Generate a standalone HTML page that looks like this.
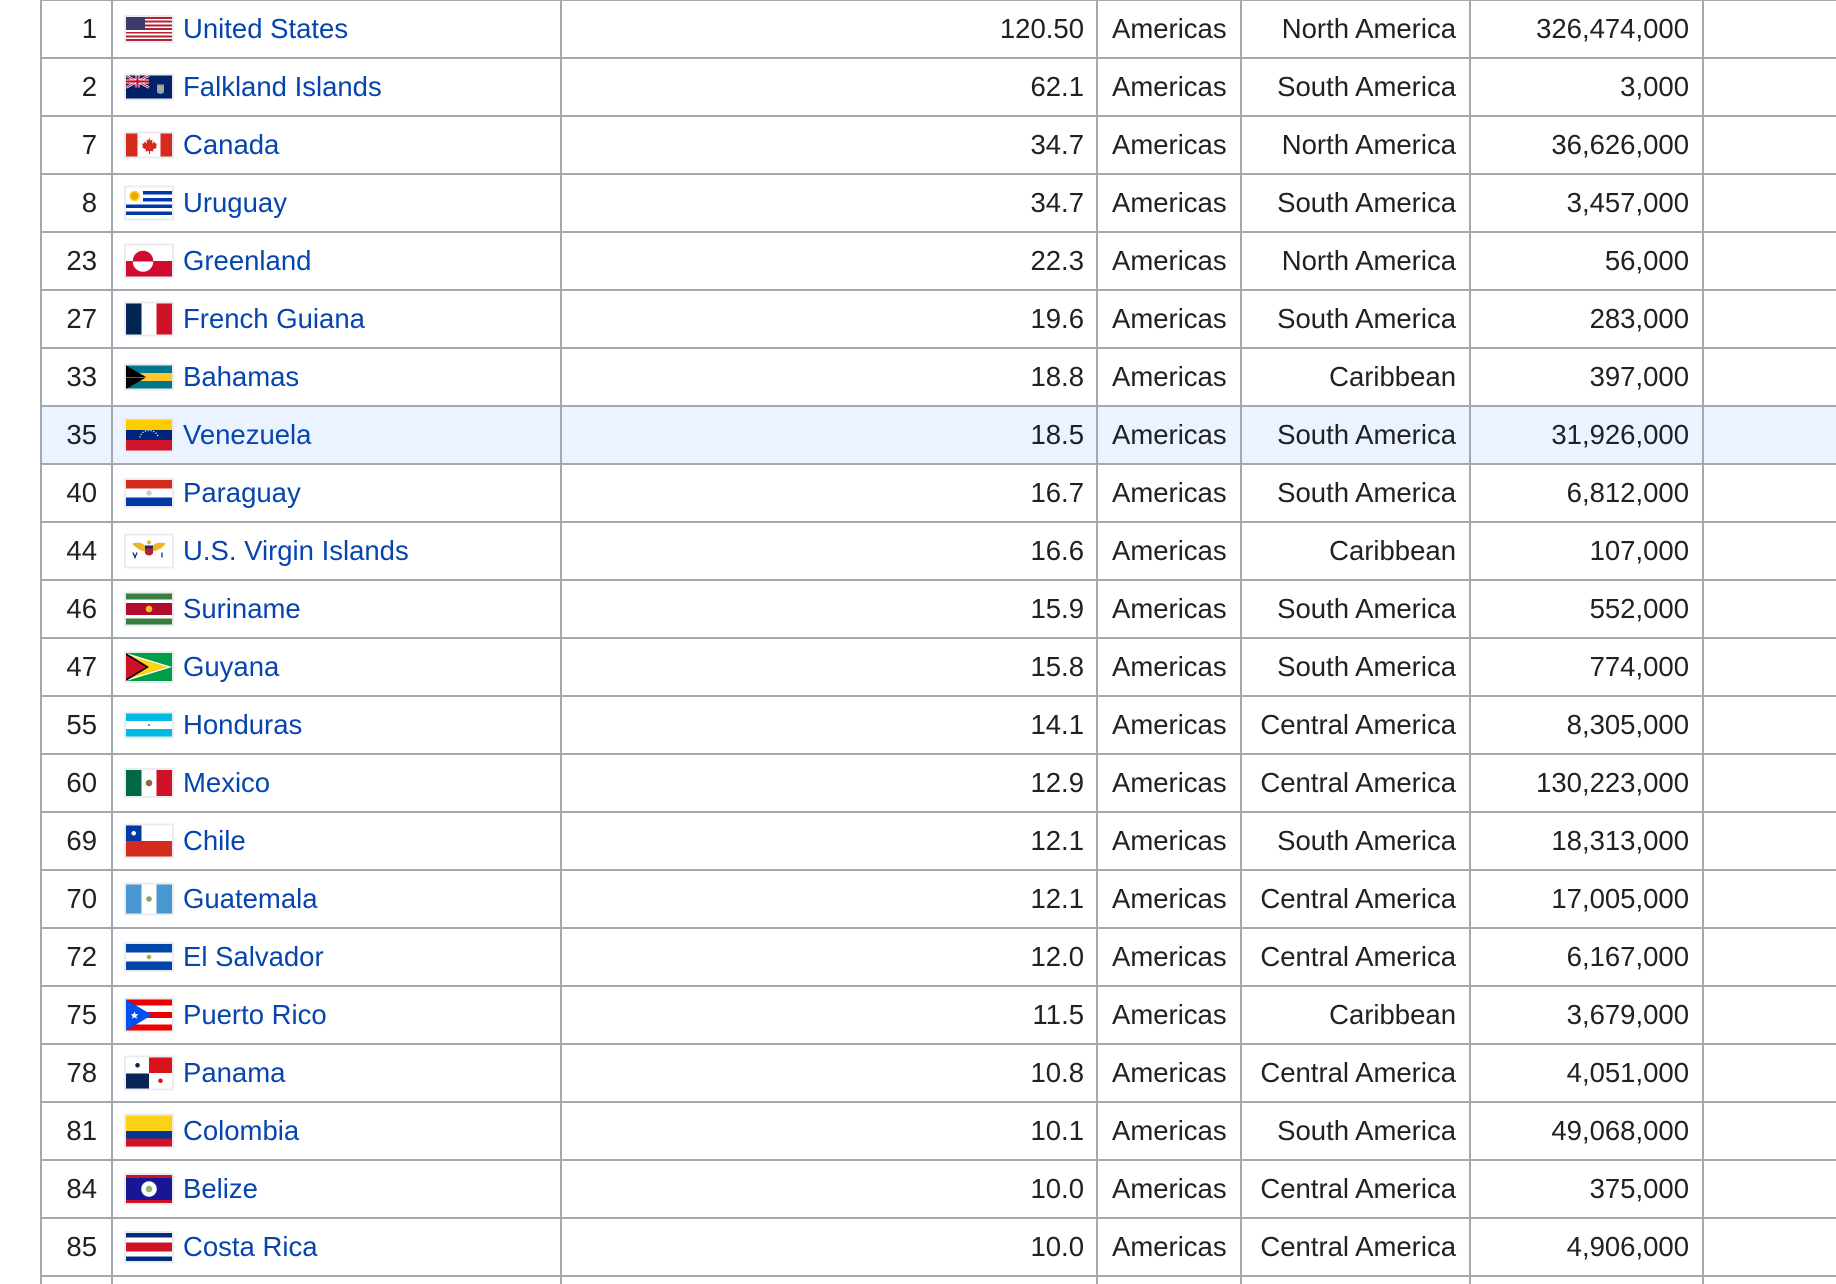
<!DOCTYPE html>
<html><head><meta charset="utf-8">
<style>
html,body{margin:0;padding:0;background:#fff;width:1836px;height:1284px;overflow:hidden;position:relative;font-family:"Liberation Sans",Arial,sans-serif;font-size:27.5px;color:#202122}
.h{position:absolute;left:40px;width:1796px;height:2px;background:#a2a9b1}
.v{position:absolute;top:0;height:1284px;width:2px;background:#a2a9b1}
.r{position:absolute;left:0;width:1836px;height:56px}
.r div{position:absolute;top:0;height:56px;line-height:56px;white-space:nowrap}
.n{right:1739px;text-align:right}
.c{left:183px;color:#0645ad}
.x{right:752px}
.a{left:1112px}
.g{right:380px}
.p{right:147px}
.f{position:absolute;left:124px;width:46px;border:2px solid #eaecf0;top:50%;transform:translateY(-50%)}
.f svg{display:block}
</style></head><body>

<div style="position:absolute;left:42px;top:407px;width:1794px;height:56px;background:#eaf3ff"></div>

<div class="v" style="left:40px"></div>
<div class="v" style="left:111px"></div>
<div class="v" style="left:560px"></div>
<div class="v" style="left:1096px"></div>
<div class="v" style="left:1240px"></div>
<div class="v" style="left:1469px"></div>
<div class="v" style="left:1702px"></div>

<div class="h" style="top:-1px"></div>
<div class="h" style="top:57px"></div>
<div class="h" style="top:115px"></div>
<div class="h" style="top:173px"></div>
<div class="h" style="top:231px"></div>
<div class="h" style="top:289px"></div>
<div class="h" style="top:347px"></div>
<div class="h" style="top:405px"></div>
<div class="h" style="top:463px"></div>
<div class="h" style="top:521px"></div>
<div class="h" style="top:579px"></div>
<div class="h" style="top:637px"></div>
<div class="h" style="top:695px"></div>
<div class="h" style="top:753px"></div>
<div class="h" style="top:811px"></div>
<div class="h" style="top:869px"></div>
<div class="h" style="top:927px"></div>
<div class="h" style="top:985px"></div>
<div class="h" style="top:1043px"></div>
<div class="h" style="top:1101px"></div>
<div class="h" style="top:1159px"></div>
<div class="h" style="top:1217px"></div>
<div class="h" style="top:1275px"></div>

<div class="r" style="top:1px"><div class="n">1</div>
<span class="f" style="height:24px;background:linear-gradient(#3c3b6e,#3c3b6e) 0 0/19px 13px no-repeat,repeating-linear-gradient(#b22234 0 1.85px,#fff 1.85px 3.7px)"></span>
<div class="c">United States</div><div class="x">120.50</div><div class="a">Americas</div><div class="g">North America</div><div class="p">326,474,000</div></div>

<div class="r" style="top:59px"><div class="n">2</div>
<span class="f" style="height:23px;background:#012169"><svg width="46" height="23"><path d="M0 0L23 12M23 0L0 12" stroke="#fff" stroke-width="2.4"/><path d="M0 0L23 12M23 0L0 12" stroke="#c8102e" stroke-width="1"/><path d="M11.5 0V12M0 6H23" stroke="#fff" stroke-width="4"/><path d="M11.5 0V12M0 6H23" stroke="#c8102e" stroke-width="2.2"/><path d="M31 9h7v8q-3.5 3-7 0z" fill="#6fa8dc"/><path d="M32 11h5v4h-5z" fill="#c9a66b"/></svg></span>
<div class="c">Falkland Islands</div><div class="x">62.1</div><div class="a">Americas</div><div class="g">South America</div><div class="p">3,000</div></div>

<div class="r" style="top:117px"><div class="n">7</div>
<span class="f" style="height:23px;background:linear-gradient(90deg,#d52b1e 0 11.5px,#fff 11.5px 34.5px,#d52b1e 34.5px)"><svg width="46" height="23"><path d="M23 4l1.5 3 2-1-0.5 4 2.5-2 0.5 2 2 0-1 3 1 1-4 2 0.5 2-3.5-0.5v3h-1v-3l-3.5 0.5 0.5-2-4-2 1-1-1-3 2 0 0.5-2 2.5 2-0.5-4 2 1z" fill="#d52b1e"/></svg></span>
<div class="c">Canada</div><div class="x">34.7</div><div class="a">Americas</div><div class="g">North America</div><div class="p">36,626,000</div></div>

<div class="r" style="top:175px"><div class="n">8</div>
<span class="f" style="height:31px;background:radial-gradient(circle at 8.5px 8.5px,#e5a50a 0 3.5px,#fcd116 3.5px 5px,#fff 5.5px) 0 0/17px 17px no-repeat,repeating-linear-gradient(#fff 0 3.44px,#0038a8 3.44px 6.89px)"></span>
<div class="c">Uruguay</div><div class="x">34.7</div><div class="a">Americas</div><div class="g">South America</div><div class="p">3,457,000</div></div>

<div class="r" style="top:233px"><div class="n">23</div>
<span class="f" style="height:31px;background:radial-gradient(circle at 17px 15.5px,#d00c33 0 10px,transparent 10.5px) 0 0/46px 15.5px no-repeat,radial-gradient(circle at 17px 0,#fff 0 10px,transparent 10.5px) 0 15.5px/46px 15.5px no-repeat,linear-gradient(#fff 50%,#d00c33 50%)"></span>
<div class="c">Greenland</div><div class="x">22.3</div><div class="a">Americas</div><div class="g">North America</div><div class="p">56,000</div></div>

<div class="r" style="top:291px"><div class="n">27</div>
<span class="f" style="height:31px;background:linear-gradient(90deg,#002654 33.3%,#fff 33.3% 66.6%,#ce1126 66.6%)"></span>
<div class="c">French Guiana</div><div class="x">19.6</div><div class="a">Americas</div><div class="g">South America</div><div class="p">283,000</div></div>

<div class="r" style="top:349px"><div class="n">33</div>
<span class="f" style="height:23px;background:linear-gradient(to top right,#000 50%,transparent 50%) 0 0/20px 11.5px no-repeat,linear-gradient(to bottom right,#000 50%,transparent 50%) 0 11.5px/20px 11.5px no-repeat,linear-gradient(#00778b 33.3%,#ffc72c 33.3% 66.6%,#00778b 66.6%)"></span>
<div class="c">Bahamas</div><div class="x">18.8</div><div class="a">Americas</div><div class="g">Caribbean</div><div class="p">397,000</div></div>

<div class="r" style="top:407px"><div class="n">35</div>
<span class="f" style="height:31px;background:linear-gradient(#ffcc00 33.3%,#00247d 33.3% 66.6%,#cf142b 66.6%)"><svg width="46" height="31"><path d="M14 18A9 7 0 0 1 32 18" fill="none" stroke="#fff" stroke-width="1.2" stroke-dasharray="1.2 1.6"/></svg></span>
<div class="c">Venezuela</div><div class="x">18.5</div><div class="a">Americas</div><div class="g">South America</div><div class="p">31,926,000</div></div>

<div class="r" style="top:465px"><div class="n">40</div>
<span class="f" style="height:26px;background:radial-gradient(circle at 23px 13px,#c8d0c8 0 2.5px,transparent 3px),linear-gradient(#d52b1e 33.3%,#fff 33.3% 66.6%,#0038a8 66.6%)"></span>
<div class="c">Paraguay</div><div class="x">16.7</div><div class="a">Americas</div><div class="g">South America</div><div class="p">6,812,000</div></div>

<div class="r" style="top:523px"><div class="n">44</div>
<span class="f" style="height:31px;background:#fff"><svg width="46" height="31"><path d="M6 8Q16 5 21 12L19 16Q12 15 6 8zM40 8Q30 5 25 12L27 16Q34 15 40 8z" fill="#e8b828"/><path d="M19 10h8v8q-4 4-8 0z" fill="#b22234"/><path d="M19 10h8v3h-8z" fill="#162e6e"/><circle cx="23" cy="7" r="2" fill="#e8b828"/><path d="M7 17l2 5 2-5M36 17v5" stroke="#162e6e" stroke-width="1.3" fill="none"/></svg></span>
<div class="c">U.S. Virgin Islands</div><div class="x">16.6</div><div class="a">Americas</div><div class="g">Caribbean</div><div class="p">107,000</div></div>

<div class="r" style="top:581px"><div class="n">46</div>
<span class="f" style="height:31px;background:radial-gradient(circle at 23px 15.5px,#ecc81d 0 3px,transparent 3.5px),linear-gradient(#377e3f 20%,#fff 20% 30%,#b40a2d 30% 70%,#fff 70% 80%,#377e3f 80%)"></span>
<div class="c">Suriname</div><div class="x">15.9</div><div class="a">Americas</div><div class="g">South America</div><div class="p">552,000</div></div>

<div class="r" style="top:639px"><div class="n">47</div>
<span class="f" style="height:28px;background:#009e49"><svg width="46" height="28"><path d="M0 0L46 14L0 28z" fill="#fff"/><path d="M0 1.5L42 14L0 26.5z" fill="#fcd116"/><path d="M0 0L23 14L0 28z" fill="#000"/><path d="M0 2L20 14L0 26z" fill="#ce1126"/></svg></span>
<div class="c">Guyana</div><div class="x">15.8</div><div class="a">Americas</div><div class="g">South America</div><div class="p">774,000</div></div>

<div class="r" style="top:697px"><div class="n">55</div>
<span class="f" style="height:23px;background:radial-gradient(circle at 23px 11.5px,#00bce4 0 1px,transparent 1.3px),linear-gradient(#00bce4 33.3%,#fff 33.3% 66.6%,#00bce4 66.6%)"></span>
<div class="c">Honduras</div><div class="x">14.1</div><div class="a">Americas</div><div class="g">Central America</div><div class="p">8,305,000</div></div>

<div class="r" style="top:755px"><div class="n">60</div>
<span class="f" style="height:26px;background:radial-gradient(circle at 23px 13px,#8c6a3c 0 3px,transparent 3.5px),linear-gradient(90deg,#006847 33.3%,#fff 33.3% 66.6%,#ce1126 66.6%)"></span>
<div class="c">Mexico</div><div class="x">12.9</div><div class="a">Americas</div><div class="g">Central America</div><div class="p">130,223,000</div></div>

<div class="r" style="top:813px"><div class="n">69</div>
<span class="f" style="height:31px;background:radial-gradient(circle at 7.75px 7.75px,#fff 0 2px,transparent 2.5px) 0 0/15.5px 15.5px no-repeat,linear-gradient(#0039a6,#0039a6) 0 0/15.5px 15.5px no-repeat,linear-gradient(#fff 50%,#d52b1e 50%)"></span>
<div class="c">Chile</div><div class="x">12.1</div><div class="a">Americas</div><div class="g">South America</div><div class="p">18,313,000</div></div>

<div class="r" style="top:871px"><div class="n">70</div>
<span class="f" style="height:29px;background:radial-gradient(circle at 23px 14.5px,#8aa06a 0 2.5px,transparent 3px),linear-gradient(90deg,#4997d0 33.3%,#fff 33.3% 66.6%,#4997d0 66.6%)"></span>
<div class="c">Guatemala</div><div class="x">12.1</div><div class="a">Americas</div><div class="g">Central America</div><div class="p">17,005,000</div></div>

<div class="r" style="top:929px"><div class="n">72</div>
<span class="f" style="height:26px;background:radial-gradient(circle at 23px 13px,#b8a84a 0 2px,transparent 2.5px),linear-gradient(#0047ab 33.3%,#fff 33.3% 66.6%,#0047ab 66.6%)"></span>
<div class="c">El Salvador</div><div class="x">12.0</div><div class="a">Americas</div><div class="g">Central America</div><div class="p">6,167,000</div></div>

<div class="r" style="top:987px"><div class="n">75</div>
<span class="f" style="height:31px;background:linear-gradient(#ed0000 20%,#fff 20% 40%,#ed0000 40% 60%,#fff 60% 80%,#ed0000 80%)"><svg width="46" height="31"><path d="M0 0L26 15.5L0 31z" fill="#0050f0"/><path d="M8.5 12l1.1 2.6 2.8.2-2.1 1.8.7 2.7-2.5-1.5-2.4 1.5.7-2.7-2.1-1.8 2.8-.2z" fill="#fff"/></svg></span>
<div class="c">Puerto Rico</div><div class="x">11.5</div><div class="a">Americas</div><div class="g">Caribbean</div><div class="p">3,679,000</div></div>

<div class="r" style="top:1045px"><div class="n">78</div>
<span class="f" style="height:31px;background:radial-gradient(circle at 11.5px 7.75px,#072357 0 2px,transparent 2.5px),radial-gradient(circle at 34.5px 23.25px,#da121a 0 2px,transparent 2.5px),linear-gradient(90deg,#fff 50%,#da121a 50%) 0 0/46px 15.5px no-repeat,linear-gradient(90deg,#072357 50%,#fff 50%) 0 15.5px/46px 15.5px no-repeat"></span>
<div class="c">Panama</div><div class="x">10.8</div><div class="a">Americas</div><div class="g">Central America</div><div class="p">4,051,000</div></div>

<div class="r" style="top:1103px"><div class="n">81</div>
<span class="f" style="height:31px;background:linear-gradient(#fcd116 50%,#003893 50% 75%,#ce1126 75%)"></span>
<div class="c">Colombia</div><div class="x">10.1</div><div class="a">Americas</div><div class="g">South America</div><div class="p">49,068,000</div></div>

<div class="r" style="top:1161px"><div class="n">84</div>
<span class="f" style="height:28px;background:radial-gradient(circle at 23px 14px,#8fb56e 0 3px,#fff 3.5px 7.5px,transparent 8px),linear-gradient(#ce1126 2.8px,#171696 2.8px 25.2px,#ce1126 25.2px)"></span>
<div class="c">Belize</div><div class="x">10.0</div><div class="a">Americas</div><div class="g">Central America</div><div class="p">375,000</div></div>

<div class="r" style="top:1219px"><div class="n">85</div>
<span class="f" style="height:28px;background:linear-gradient(#002b7f 16.66%,#fff 16.66% 33.33%,#ce1126 33.33% 66.66%,#fff 66.66% 83.33%,#002b7f 83.33%)"></span>
<div class="c">Costa Rica</div><div class="x">10.0</div><div class="a">Americas</div><div class="g">Central America</div><div class="p">4,906,000</div></div>

</body></html>
